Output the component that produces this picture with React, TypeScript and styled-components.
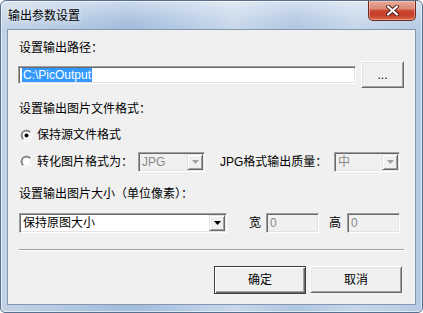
import React from "react";
import styled, { createGlobalStyle } from "styled-components";

const GlobalStyle = createGlobalStyle`
  html, body { margin: 0; padding: 0; background: #ffffff; }
  body {
    font-family: "Liberation Sans", "Noto Sans CJK SC", sans-serif;
    font-size: 12px;
    color: #000;
  }
  * { box-sizing: border-box; }
`;

const Window = styled.div`
  width: 423px;
  height: 313px;
  border: 1px solid #56708e;
  border-radius: 6px 6px 5px 5px;
  padding: 0 6px 7px 6px;
  display: flex;
  flex-direction: column;
  box-shadow: inset 0 0 0 1px rgba(255, 255, 255, 0.55);
  background:
    linear-gradient(180deg, rgba(255,255,255,0.45) 0px, rgba(255,255,255,0.12) 18px, rgba(255,255,255,0) 28px),
    linear-gradient(90deg, #c3d3e6 0%, #b4c9e2 15%, #a2bcdc 30%, #b2c8e3 42%, #c8d8eb 55%, #b0c6e1 70%, #c6d7ea 84%, #b6cbe4 100%);
`;

const TitleBar = styled.div`
  height: 28px;
  display: flex;
  align-items: flex-start;
  padding-left: 1px;
`;

const Title = styled.div`
  margin-top: 6px;
  line-height: 16px;
  font-family: "Noto Sans CJK SC", sans-serif;
  font-size: 12px;
  color: #000;
  text-shadow: 0 0 6px rgba(255, 255, 255, 0.9);
`;

const CloseButton = styled.div`
  margin-left: auto;
  width: 48px;
  height: 20px;
  border: 1px solid #6e2a20;
  border-top: none;
  border-radius: 0 0 5px 5px;
  display: flex;
  align-items: center;
  justify-content: center;
  background: linear-gradient(180deg, #e9aa9a 0%, #dc8a76 40%, #c9452f 52%, #c63f2b 75%, #d9684c 100%);
  box-shadow: inset 0 0 0 1px rgba(255, 220, 200, 0.45);
`;

const Client = styled.div`
  flex: 1;
  background: #f0f0f0;
  border: 1px solid #8598b0;
  padding: 0 11px 0 11px;
  display: flex;
  flex-direction: column;
`;

const Label = styled.div<{ $mt: number }>`
  margin-top: ${(p) => p.$mt}px;
  height: 16px;
  line-height: 16px;
  white-space: nowrap;
`;

const Row = styled.div<{ $mt: number; $h: number }>`
  margin-top: ${(p) => p.$mt}px;
  height: ${(p) => p.$h}px;
  display: flex;
  align-items: center;
`;

const Sunken = styled.div<{ $w: number; $h: number; $ml?: number; $disabled?: boolean }>`
  width: ${(p) => p.$w}px;
  height: ${(p) => p.$h}px;
  margin-left: ${(p) => p.$ml ?? 0}px;
  border: 1px solid;
  border-color: #a0a0a0 #ffffff #ffffff #a0a0a0;
  box-shadow: inset 1px 1px 0 #696969, inset -1px -1px 0 #e3e3e3;
  background: ${(p) => (p.$disabled ? "#f0f0f0" : "#ffffff")};
  padding: 1px;
  display: flex;
  align-items: center;
  flex-shrink: 0;
`;

const FieldText = styled.span<{ $disabled?: boolean }>`
  padding-left: 2px;
  line-height: 14px;
  color: ${(p) => (p.$disabled ? "#8a8a8a" : "#000")};
  white-space: nowrap;
`;

const Selection = styled.span`
  margin-left: 2px;
  background: #3399ff;
  color: #ffffff;
  line-height: 14px;
  height: 14px;
  padding: 0 1px;
  white-space: nowrap;
`;

const ComboText = styled.span<{ $disabled?: boolean }>`
  flex: 1;
  padding-left: 2px;
  line-height: 16px;
  color: ${(p) => (p.$disabled ? "#8a8a8a" : "#000")};
  white-space: nowrap;
  overflow: hidden;
`;

const DropButton = styled.div`
  width: 16px;
  height: 16px;
  border: 1px solid;
  border-color: #e3e3e3 #696969 #696969 #e3e3e3;
  box-shadow: inset 1px 1px 0 #ffffff, inset -1px -1px 0 #a0a0a0;
  background: #f0f0f0;
  display: flex;
  align-items: center;
  justify-content: center;
  flex-shrink: 0;
`;

const PushButton = styled.div<{ $w: number; $h: number; $default?: boolean; $ml?: number }>`
  width: ${(p) => p.$w}px;
  height: ${(p) => p.$h}px;
  margin-left: ${(p) => p.$ml ?? 0}px;
  flex-shrink: 0;
  background: #f0f0f0;
  border: 1px solid;
  border-color: ${(p) =>
    p.$default ? "#404040" : "#ffffff #696969 #696969 #ffffff"};
  box-shadow: ${(p) =>
    p.$default
      ? "inset 1px 1px 0 #ffffff, inset -1px -1px 0 #696969, inset -2px -2px 0 #a0a0a0"
      : "inset 1px 1px 0 #e3e3e3, inset -1px -1px 0 #a0a0a0"};
  display: flex;
  align-items: center;
  justify-content: center;
  line-height: 16px;
  white-space: nowrap;
`;

const RadioText = styled.span`
  margin-left: 4px;
  line-height: 16px;
  white-space: nowrap;
`;

const InlineLabel = styled.span<{ $ml: number }>`
  margin-left: ${(p) => p.$ml}px;
  line-height: 16px;
  white-space: nowrap;
`;

const Separator = styled.div`
  margin-top: 16px;
  height: 2px;
  border-top: 1px solid #a0a0a0;
  border-bottom: 1px solid #ffffff;
`;

const Footer = styled.div`
  margin-top: 15px;
  display: flex;
  justify-content: flex-end;
  align-items: flex-start;
  padding-right: 2px;
`;

const Radio: React.FC<{ checked?: boolean }> = ({ checked }) => (
  <svg width="13" height="13" viewBox="0 0 13 13" style={{ marginLeft: 1, flexShrink: 0 }}>
    <defs>
      <linearGradient id="ro" x1="0" y1="0" x2="1" y2="1">
        <stop offset="0.5" stopColor="#a0a0a0" />
        <stop offset="0.5" stopColor="#ffffff" />
      </linearGradient>
      <linearGradient id="ri" x1="0" y1="0" x2="1" y2="1">
        <stop offset="0.5" stopColor="#696969" />
        <stop offset="0.5" stopColor="#e3e3e3" />
      </linearGradient>
    </defs>
    <circle cx="6.5" cy="6.5" r="6" fill="url(#ro)" />
    <circle cx="6.5" cy="6.5" r="5" fill="url(#ri)" />
    <circle cx="6.5" cy="6.5" r="4" fill="#ffffff" />
    {checked && <circle cx="6.5" cy="6.5" r="2" fill="#000000" />}
  </svg>
);

const Arrow: React.FC<{ disabled?: boolean }> = ({ disabled }) => (
  <svg width="7" height="4" viewBox="0 0 7 4">
    <polygon points="0,0 7,0 3.5,4" fill={disabled ? "#a0a0a0" : "#000000"} />
  </svg>
);

const Combo: React.FC<{ w: number; ml?: number; disabled?: boolean; text: string; h?: number }> = ({
  w,
  ml,
  disabled,
  text,
  h = 20,
}) => (
  <Sunken $w={w} $h={h} $ml={ml} $disabled={disabled}>
    <ComboText $disabled={disabled}>{text}</ComboText>
    <DropButton>
      <Arrow disabled={disabled} />
    </DropButton>
  </Sunken>
);

export default function App() {
  return (
    <>
      <GlobalStyle />
      <Window>
        <TitleBar>
          <Title>输出参数设置</Title>
          <CloseButton>
            <svg width="13" height="11" viewBox="0 0 13 11">
              <path d="M2 1.5 L11 9.5 M11 1.5 L2 9.5" stroke="#4a1812" strokeWidth="4" strokeLinecap="round" />
              <path d="M2 1.5 L11 9.5 M11 1.5 L2 9.5" stroke="#ffffff" strokeWidth="2.2" strokeLinecap="round" />
            </svg>
          </CloseButton>
        </TitleBar>
        <Client>
          <Label $mt={10}>设置输出路径：</Label>
          <Row $mt={5} $h={27}>
            <Sunken $w={338} $h={18} $ml={-1}>
              <Selection>C:\PicOutput</Selection>
            </Sunken>
            <PushButton $w={43} $h={27} $ml={5}>...</PushButton>
          </Row>
          <Label $mt={13}>设置输出图片文件格式：</Label>
          <Row $mt={10} $h={16}>
            <Radio checked />
            <RadioText>保持源文件格式</RadioText>
          </Row>
          <Row $mt={8} $h={21}>
            <Radio />
            <RadioText>转化图片格式为：</RadioText>
            <Combo w={67} ml={5} disabled text="JPG" />
            <InlineLabel $ml={15}>JPG格式输出质量：</InlineLabel>
            <span style={{ flex: 1 }} />
            <Combo w={66} disabled text="中" />
            <span style={{ width: 4, flexShrink: 0 }} />
          </Row>
          <Label $mt={14}>设置输出图片大小（单位像素）：</Label>
          <Row $mt={10} $h={21}>
            <Combo w={208} text="保持原图大小" />
            <InlineLabel $ml={22}>宽</InlineLabel>
            <Sunken $w={53} $h={20} $ml={5} $disabled>
              <FieldText $disabled>0</FieldText>
            </Sunken>
            <InlineLabel $ml={10}>高</InlineLabel>
            <Sunken $w={53} $h={20} $ml={6} $disabled>
              <FieldText $disabled>0</FieldText>
            </Sunken>
          </Row>
          <Separator />
          <Footer>
            <PushButton $w={92} $h={28} $default>确定</PushButton>
            <PushButton $w={92} $h={27} $ml={4}>取消</PushButton>
          </Footer>
        </Client>
      </Window>
    </>
  );
}
